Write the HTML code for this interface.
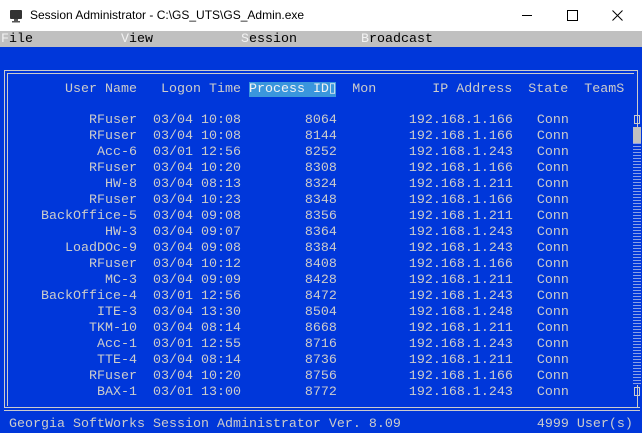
<!DOCTYPE html>
<html><head><style>
body{margin:0;width:642px;height:432px;overflow:hidden;background:#0037da;position:relative;font-family:"Liberation Mono",monospace;}
.t{position:absolute;left:0;top:0;width:642px;height:31px;background:#fff;font-family:"Liberation Sans",sans-serif;font-size:12px;color:#000;}
.m{position:absolute;left:0;top:31px;width:642px;height:16px;background:#c0c0c0;}
pre{margin:0;position:absolute;left:1px;font-family:"Liberation Mono",monospace;font-size:13.33px;line-height:16px;color:#cccccc;white-space:pre;}
.hl{background:#3a96dd;color:#f2f2f2}
.k{color:#f2f2f2}
</style></head><body>
<div class="t">
<svg style="position:absolute;left:9px;top:9px" width="14" height="14"><rect x="1" y="1" width="12" height="9" rx="1" fill="#333"/><rect x="5" y="10" width="4" height="2" fill="#555"/><rect x="3" y="12" width="8" height="1.5" fill="#555"/></svg>
<span style="position:absolute;left:30px;top:8px">Session Administrator - C:\GS_UTS\GS_Admin.exe</span>
<div style="position:absolute;left:522px;top:15px;width:10px;height:1px;background:#000"></div>
<div style="position:absolute;left:567px;top:10px;width:9px;height:9px;border:1px solid #000"></div>
<svg style="position:absolute;left:612px;top:10px" width="11" height="11"><path d="M0.5 0.5L10.5 10.5M10.5 0.5L0.5 10.5" stroke="#000"/></svg>
</div>
<div class="m"></div>
<pre style="top:32px;color:#000"><span class="k">F</span>ile           <span class="k">V</span>iew           <span class="k">S</span>ession        <span class="k">B</span>roadcast</pre>
<div style="position:absolute;left:4px;top:70px;width:632px;height:337px;border:1px solid #ccc;border-bottom:none"></div>
<div style="position:absolute;left:7px;top:73px;width:626px;height:332px;border:1px solid #ccc;border-bottom:none;border-right:none"></div>
<div style="position:absolute;left:4px;top:407px;width:636px;height:1px;background:#ccc"></div>
<div style="position:absolute;left:4px;top:410px;width:636px;height:1px;background:#ccc"></div>
<pre style="top:82px">        User Name   Logon Time <span class="hl">Process ID▯</span>  Mon       IP Address  State  TeamS</pre>
<pre style="top:113px">           RFuser  03/04 10:08        8064         192.168.1.166   Conn
           RFuser  03/04 10:08        8144         192.168.1.166   Conn
            Acc-6  03/01 12:56        8252         192.168.1.243   Conn
           RFuser  03/04 10:20        8308         192.168.1.166   Conn
             HW-8  03/04 08:13        8324         192.168.1.211   Conn
           RFuser  03/04 10:23        8348         192.168.1.166   Conn
     BackOffice-5  03/04 09:08        8356         192.168.1.211   Conn
             HW-3  03/04 09:07        8364         192.168.1.243   Conn
        LoadDOc-9  03/04 09:08        8384         192.168.1.243   Conn
           RFuser  03/04 10:12        8408         192.168.1.166   Conn
             MC-3  03/04 09:09        8428         192.168.1.211   Conn
     BackOffice-4  03/01 12:56        8472         192.168.1.243   Conn
            ITE-3  03/04 13:30        8504         192.168.1.248   Conn
           TKM-10  03/04 08:14        8668         192.168.1.211   Conn
            Acc-1  03/01 12:55        8716         192.168.1.243   Conn
            TTE-4  03/04 08:14        8736         192.168.1.211   Conn
           RFuser  03/04 10:20        8756         192.168.1.166   Conn
            BAX-1  03/01 13:00        8772         192.168.1.243   Conn</pre>
<div style="position:absolute;left:634px;top:115px;width:6px;height:9px;border:1px solid #ccc;box-sizing:border-box"></div>
<div style="position:absolute;left:633px;top:127px;width:8px;height:16px;background:#c0c0c0"></div>
<div style="position:absolute;left:633px;top:143px;width:8px;height:242px;background:repeating-linear-gradient(#8a9fe6 0 1px,#0037da 1px 3px)"></div>
<div style="position:absolute;left:634px;top:387px;width:6px;height:9px;border:1px solid #ccc;box-sizing:border-box"></div>
<pre style="top:417px"> Georgia SoftWorks Session Administrator Ver. 8.09                 4999 User(s)</pre>
</body></html>
